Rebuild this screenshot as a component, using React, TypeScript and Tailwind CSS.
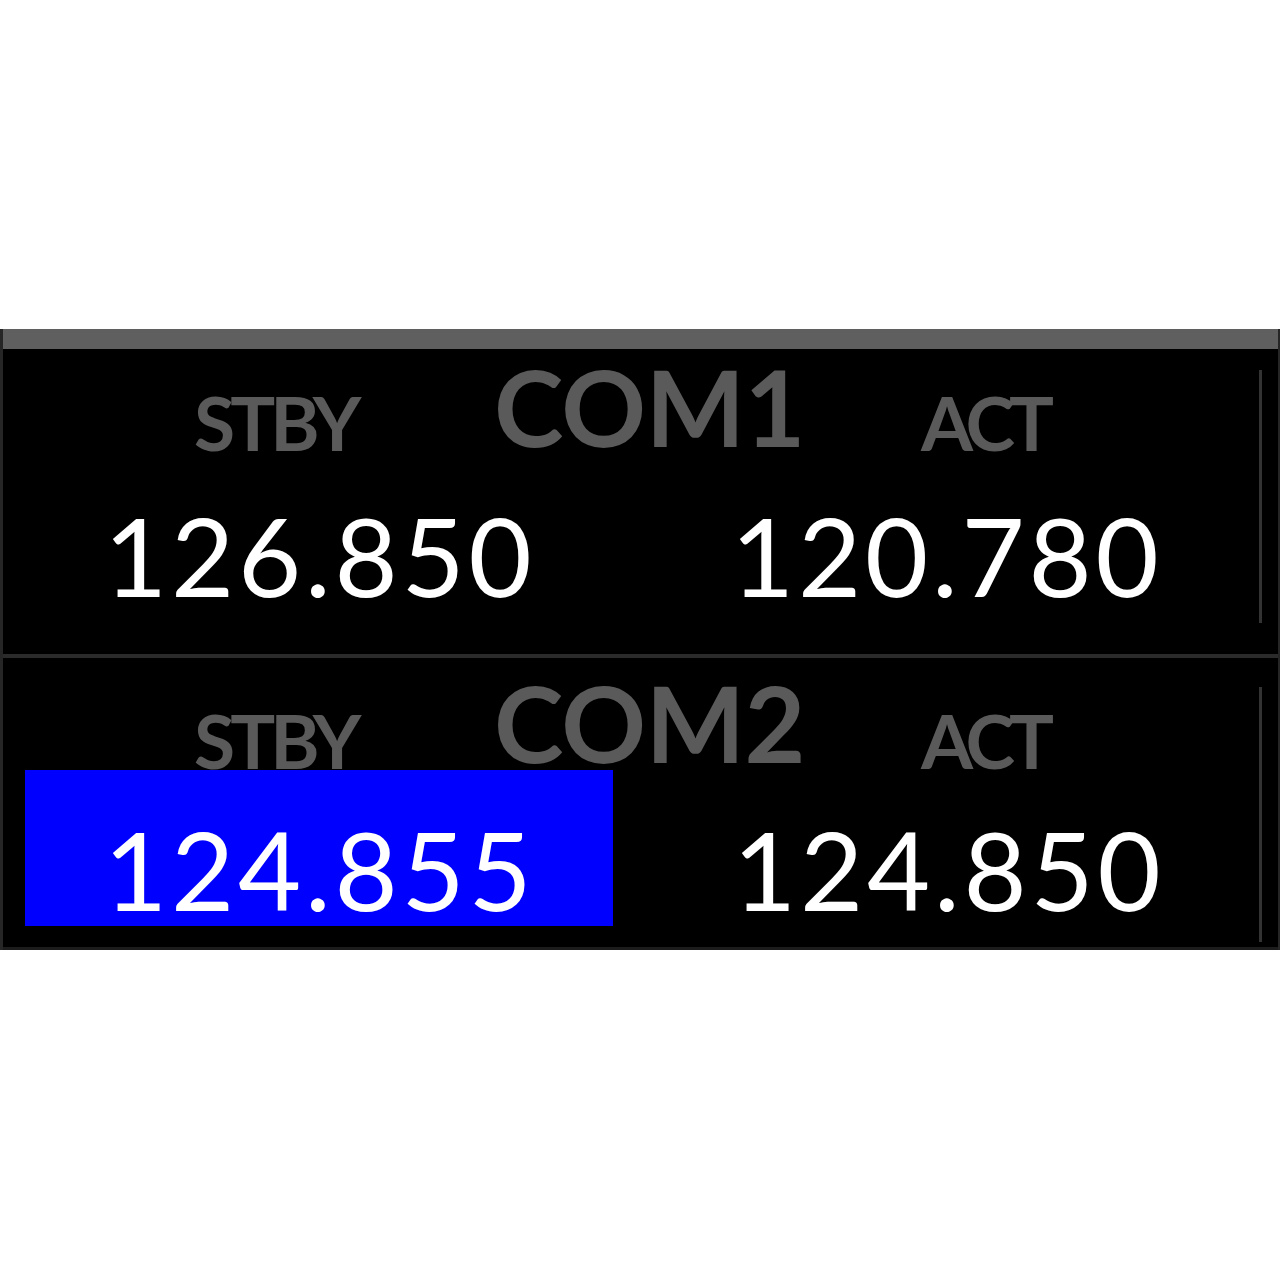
const labelFont = { fontFamily: 'Lato, "Open Sans", "Liberation Sans", sans-serif' };

interface RadioRowProps {
  name: string;
  stby: string;
  act: string;
  selected?: boolean;
}

function ComRowTop({ name, stby, act }: RadioRowProps) {
  return (
    <div className="flex h-[305px]">
      <div className="flex-1 flex flex-col">
        <div className="grid grid-cols-[489px_429px_1fr] h-[151px] font-bold text-[#5a5a5a] leading-none">
          <div className="pl-[191px] pt-[36px] text-[75px] tracking-[-5px]">STBY</div>
          <div className="pl-[2px] pt-[5px] text-[105px] tracking-[-0.5px]">{name}</div>
          <div className="pt-[36px] text-[75px] tracking-[-6px]">ACT</div>
        </div>
        <div className="grid grid-cols-[728px_1fr] text-white text-[109px] leading-none tracking-[3.8px]">
          <div className="pl-[101px]">{stby}</div>
          <div>{act}</div>
        </div>
      </div>
      <div className="w-[3px] mt-[21px] mb-[31px] bg-[#333333]" />
      <div className="w-[16px]" />
    </div>
  );
}

function ComRowBottom({ name, stby, act }: RadioRowProps) {
  return (
    <div className="flex h-[289px]">
      <div className="flex-1 flex flex-col">
        <div className="grid grid-cols-[489px_429px_1fr] h-[112px] font-bold text-[#5a5a5a] leading-none">
          <div className="pl-[191px] pt-[45px] text-[75px] tracking-[-5px]">STBY</div>
          <div className="pl-[2px] pt-[12px] text-[105px] tracking-[-0.5px]">{name}</div>
          <div className="pt-[45px] text-[75px] tracking-[-6px]">ACT</div>
        </div>
        <div className="grid grid-cols-[728px_1fr] text-white text-[109px] leading-none tracking-[3.8px]">
          <div className="pl-[22px]">
            <div className="w-[588px] h-[156px] bg-[#0000ff] pl-[79px] pt-[44px]">{stby}</div>
          </div>
          <div className="pl-[2px] pt-[44px]">{act}</div>
        </div>
      </div>
      <div className="w-[3px] mt-[29px] mb-[5px] bg-[#333333]" />
      <div className="w-[16px]" />
    </div>
  );
}

export default function App() {
  return (
    <div className="min-h-[1280px] bg-white pt-[329px]" style={labelFont}>
      <div className="w-full bg-black border-l-[3px] border-r-[2px] border-[#262626]">
        <div className="h-[20px] bg-[#5f5f5f]" />
        <ComRowTop name="COM1" stby="126.850" act="120.780" />
        <div className="h-[4px] bg-[#2b2b2b]" />
        <ComRowBottom name="COM2" stby="124.855" act="124.850" selected />
        <div className="h-[3px] bg-[#1c1c1c]" />
      </div>
    </div>
  );
}
